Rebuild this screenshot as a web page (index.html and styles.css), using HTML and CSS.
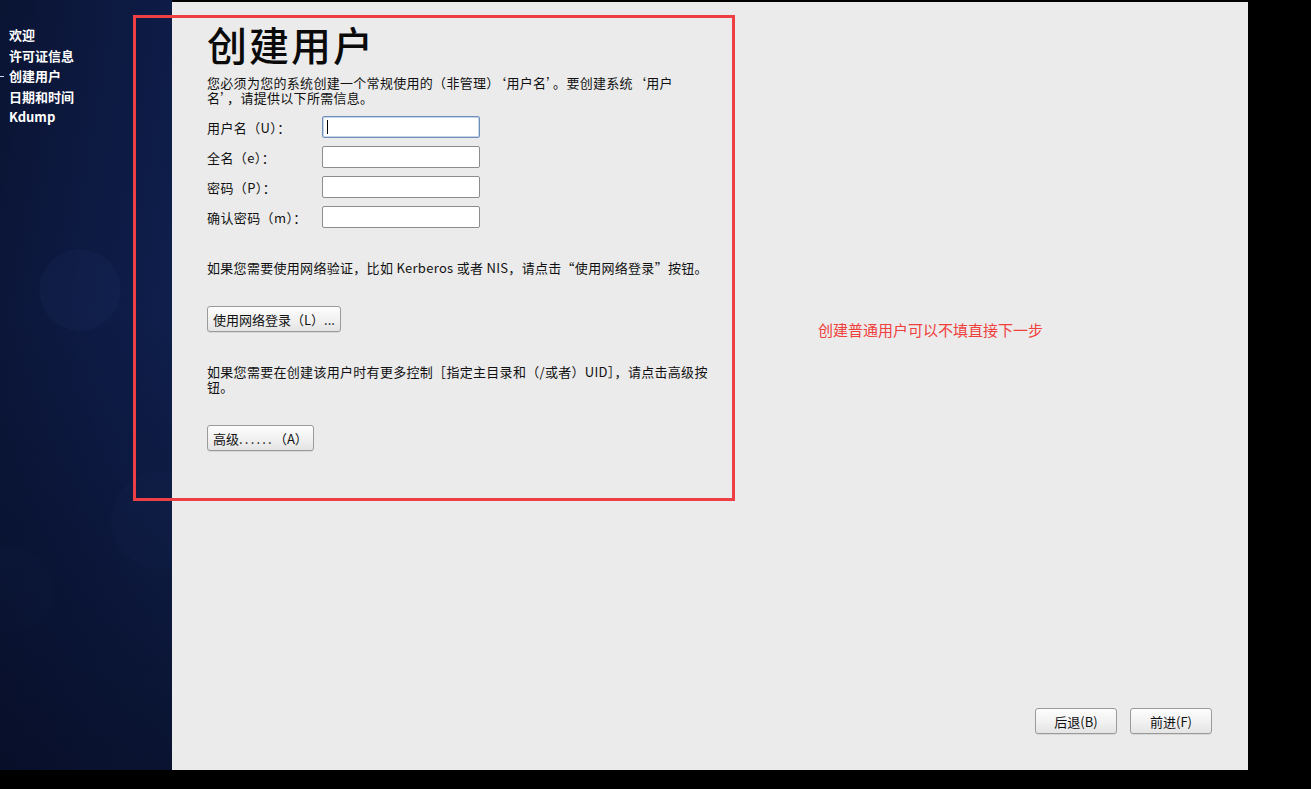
FILE: index.html
```html
<!DOCTYPE html>
<html lang="zh-CN">
<head>
<meta charset="utf-8">
<title>创建用户</title>
<link rel="stylesheet" href="styles.css">
</head>
<body>
<div class="screen">
  <nav class="sidebar">
    <ul class="steps">
      <li>欢迎</li>
      <li>许可证信息</li>
      <li class="current">创建用户</li>
      <li>日期和时间</li>
      <li>Kdump</li>
    </ul>
  </nav>
  <main class="main">
    <div class="content">
      <h1 class="title">创建用户</h1>
      <p class="desc"><span class="line">您必须为您的系统创建一个常规使用的（非管理）‘用户名’。要创建系统‘用户</span><span class="line">名’，请提供以下所需信息。</span></p>
      <div class="form">
        <label class="row"><span class="lbl">用户名（U）：</span><span class="input focused"><span class="caret"></span></span></label>
        <label class="row"><span class="lbl">全名（e）：</span><span class="input"></span></label>
        <label class="row"><span class="lbl">密码（P）：</span><span class="input"></span></label>
        <label class="row"><span class="lbl">确认密码（m）：</span><span class="input"></span></label>
      </div>
      <p class="para"><span class="line">如果您需要使用网络验证，比如 Kerberos 或者 NIS，请点击“使用网络登录”按钮。</span></p>
      <button class="btn">使用网络登录（L）...</button>
      <p class="para"><span class="line">如果您需要在创建该用户时有更多控制［指定主目录和（/或者）UID］，请点击高级按</span><span class="line">钮。</span></p>
      <button class="btn">高级<span class="dots">......</span>（A）</button>
    </div>
    <div class="nav-buttons">
      <button class="btn nav">后退(B)</button>
      <button class="btn nav">前进(F)</button>
    </div>
    <div class="highlight"></div>
    <div class="note">创建普通用户可以不填直接下一步</div>
  </main>
</div>
</body>
</html>
```
FILE: styles.css
```css
html, body {
  margin: 0;
  padding: 0;
  background: #000;
}
body {
  width: 1311px;
  height: 789px;
  overflow: hidden;
  font-family: "Noto Sans CJK SC", "DejaVu Sans", sans-serif;
}
.screen {
  display: flex;
  height: 770px;
}
.sidebar {
  width: 172px;
  height: 770px;
  flex: none;
  background:
    radial-gradient(circle at 80px 290px, rgba(40, 60, 120, 0.12) 0 40px, transparent 41px),
    radial-gradient(circle at 10px 590px, rgba(30, 45, 95, 0.12) 0 42px, transparent 43px),
    radial-gradient(circle at 160px 520px, rgba(40, 60, 120, 0.1) 0 48px, transparent 49px),
    linear-gradient(100deg, #0a1433 0%, #0e1c48 60%, #122454 100%);
  position: relative;
}
.sidebar::after {
  content: "";
  position: absolute;
  inset: 0;
  background: linear-gradient(180deg, rgba(0,0,0,0) 40%, rgba(3,6,20,0.55) 100%);
}
.steps {
  list-style: none;
  margin: 0;
  padding: 25px 0 0 9px;
  position: relative;
  z-index: 1;
}
.steps li {
  color: #fff;
  font-weight: bold;
  font-size: 13px;
  line-height: 20.5px;
  position: relative;
}
.steps li.current::before {
  content: "";
  position: absolute;
  left: -9px;
  top: 10px;
  width: 4px;
  height: 1px;
  background: #cfd6e8;
}
.main {
  width: 1076px;
  height: 768px;
  margin-top: 2px;
  background: #ebebeb;
  position: relative;
  display: flex;
  flex-direction: column;
  justify-content: space-between;
  box-sizing: border-box;
  padding: 0 36px 36px 35px;
}
.content {
  display: flex;
  flex-direction: column;
  align-items: flex-start;
}
.title {
  margin: 21px 0 0 0;
  font-size: 40px;
  line-height: 42px;
  font-weight: 500;
  color: #0a0a0a;
  letter-spacing: 2px;
}
.desc, .para {
  margin: 0;
  font-size: 13px;
  color: #111;
  white-space: nowrap;
  letter-spacing: 0.3px;
}
.line {
  display: block;
  height: 15px;
  line-height: 15px;
  overflow: visible;
}
.desc {
  margin-top: 10px;
}
.form {
  margin-top: 11px;
  display: flex;
  flex-direction: column;
  gap: 8px;
}
.row {
  display: flex;
  align-items: center;
  height: 22px;
}
.lbl {
  width: 115px;
  font-size: 13px;
  color: #111;
  letter-spacing: 0.4px;
}
.input {
  width: 158px;
  height: 22px;
  box-sizing: border-box;
  border: 1px solid #8c8c8c;
  border-radius: 2px;
  background: #fff;
  display: flex;
  align-items: center;
  padding-left: 4px;
}
.input.focused {
  border-color: #6f8fb8;
  box-shadow: inset 0 0 0 1px #c6d4e8;
}
.caret {
  width: 1px;
  height: 14px;
  background: #000;
}
.form + .para {
  margin-top: 32px;
}
.btn {
  font-family: inherit;
  font-size: 13px;
  color: #111;
  height: 26px;
  padding: 0 5px;
  border: 1px solid #9a9a9a;
  border-radius: 3px;
  background: linear-gradient(180deg, #fdfdfd 0%, #f2f2f2 50%, #e4e4e4 100%);
  box-shadow: 0 1px 0 rgba(0,0,0,0.08);
  cursor: pointer;
}
.dots {
  letter-spacing: 2.2px;
}
.content .btn {
  margin-top: 31px;
}
.content .btn + .para {
  margin-top: 32px;
}
.nav-buttons {
  display: flex;
  justify-content: flex-end;
  gap: 13px;
}
.btn.nav {
  width: 82px;
  padding: 0;
}
.highlight {
  position: absolute;
  left: -39px;
  top: 13px;
  width: 602px;
  height: 486px;
  box-sizing: border-box;
  border: 3px solid #ee3f45;
  pointer-events: none;
}
.note {
  position: absolute;
  left: 646px;
  top: 318px;
  font-size: 15px;
  line-height: 20px;
  color: #f0403c;
}
```
